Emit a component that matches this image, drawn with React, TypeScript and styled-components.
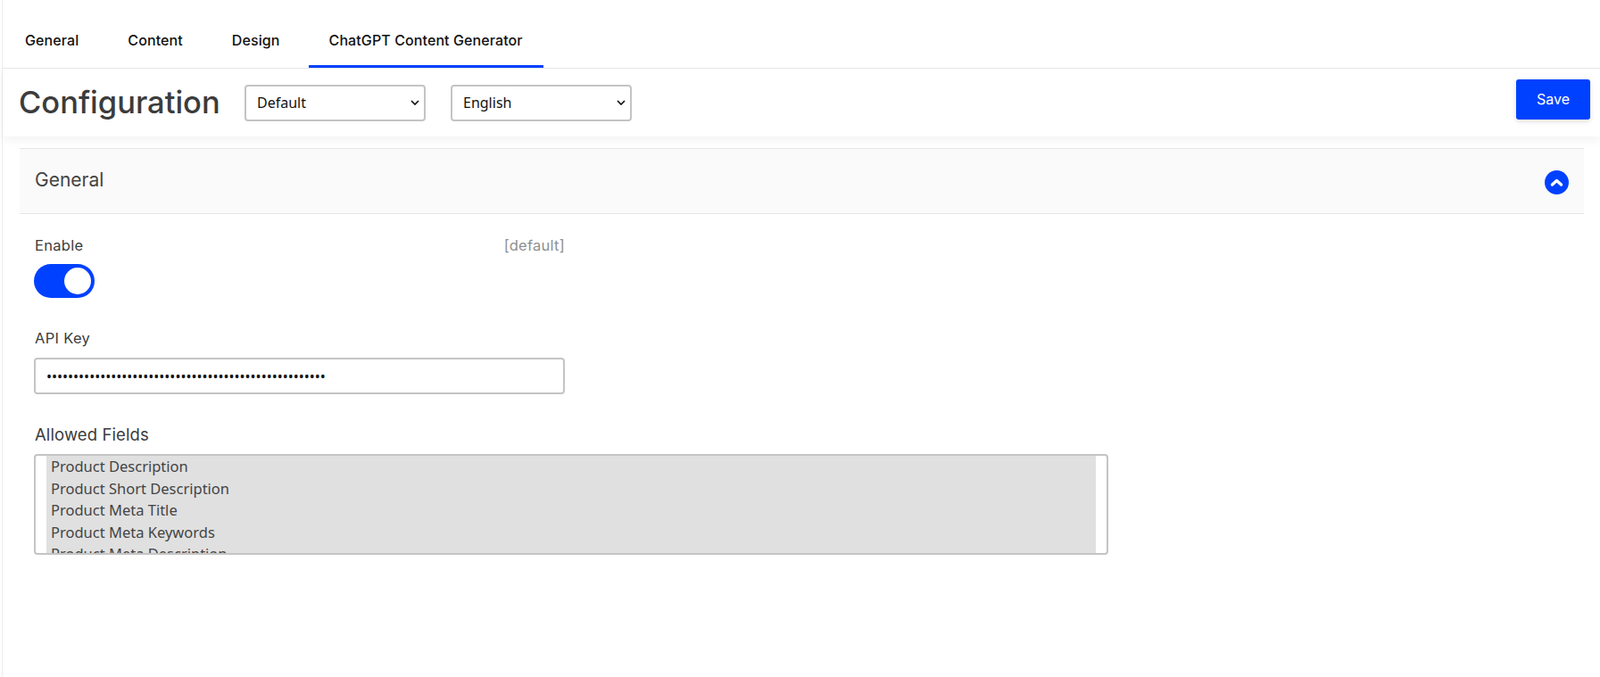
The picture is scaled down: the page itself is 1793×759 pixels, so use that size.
import React from 'react';
import styled, { createGlobalStyle } from 'styled-components';

const GlobalStyle = createGlobalStyle`
    html, body {
        margin: 0;
        padding: 0;
        background: #ffffff;
        overflow: hidden;
    }
    body {
        font-family: 'Inter', 'Liberation Sans', sans-serif;
        color: #3c3c3c;
    }
`;

const tabs = ['General', 'Content', 'Design', 'ChatGPT Content Generator'];
const fields = [
    'Product Description',
    'Product Short Description',
    'Product Meta Title',
    'Product Meta Keywords',
    'Product Meta Description',
];

const chevron = encodeURIComponent(
    '<svg xmlns="http://www.w3.org/2000/svg" width="10" height="6" viewBox="0 0 10 6"><path d="M1 1 L5 5 L9 1" fill="none" stroke="#111" stroke-width="1.7"/></svg>',
);

const App: React.FC = () => {
    return (
        <Page>
            <GlobalStyle />
            <TabBar>
                {tabs.map((tab) => (
                    <Tab key={tab} $active={tab === tabs[3]}>
                        {tab}
                    </Tab>
                ))}
            </TabBar>
            <Header>
                <Title>Configuration</Title>
                <Select defaultValue="Default">
                    <option>Default</option>
                </Select>
                <Select defaultValue="English">
                    <option>English</option>
                </Select>
                <SaveButton>Save</SaveButton>
            </Header>
            <Section>
                <SectionHead>
                    <SectionTitle>General</SectionTitle>
                    <Collapse>
                        <svg width="15" height="11" viewBox="0 0 15 11" fill="none">
                            <path d="M2.5 8 L7.5 3.5 L12.5 8" stroke="#fff" strokeWidth="3.4" strokeLinecap="round" strokeLinejoin="round" />
                        </svg>
                    </Collapse>
                </SectionHead>
                <SectionBody>
                    <NarrowField>
                        <LabelRow>
                            <Label>Enable</Label>
                            <Scope>[default]</Scope>
                        </LabelRow>
                        <Toggle>
                            <Knob />
                        </Toggle>
                    </NarrowField>
                    <ApiField>
                        <Label>API Key</Label>
                        <PasswordInput type="password" defaultValue={'x'.repeat(52)} />
                    </ApiField>
                    <WideField>
                        <BigLabel>Allowed Fields</BigLabel>
                        <ListBox multiple defaultValue={fields} size={5}>
                            {fields.map((field) => (
                                <option key={field}>{field}</option>
                            ))}
                        </ListBox>
                    </WideField>
                </SectionBody>
            </Section>
        </Page>
    );
};

export default App;

const Page = styled.div`
    height: 759px;
    margin-left: 2px;
    border-left: 1px solid #ececec;
    box-sizing: border-box;
`;

const TabBar = styled.nav`
    height: 77px;
    box-sizing: border-box;
    display: flex;
    align-items: stretch;
    gap: 9px;
    padding-left: 2px;
    border-bottom: 1px solid #e8e8e8;
`;

const Tab = styled.div<{ $active?: boolean }>`
    display: flex;
    align-items: center;
    box-sizing: border-box;
    padding: 17px 23px 0;
    font-size: 16px;
    font-weight: 450;
    letter-spacing: 0.1px;
    color: #111111;
    border-bottom: 3px solid ${(p) => (p.$active ? '#0041ff' : 'transparent')};
`;

const Header = styled.header`
    height: 76px;
    box-sizing: border-box;
    display: flex;
    align-items: center;
    padding: 0 11px 0 18px;
    background: #ffffff;
    box-shadow: 0 4px 10px rgba(0, 0, 0, 0.05);
`;

const Title = styled.h1`
    margin: 0 28px 0 0;
    width: 225px;
    font-size: 34.5px;
    line-height: 40px;
    font-weight: 500;
    white-space: nowrap;
    color: #3c3c3c;
`;

const Select = styled.select`
    width: 203px;
    height: 41px;
    margin: 0 28px 0 0;
    padding: 0 20px 0 12px;
    box-sizing: border-box;
    border: 2px solid #c4c4c4;
    border-radius: 4px;
    appearance: none;
    background: #ffffff url("data:image/svg+xml,${chevron}") no-repeat right 5px center;
    font-family: 'Noto Sans', sans-serif;
    font-size: 16px;
    color: #111111;
`;

const SaveButton = styled.button`
    width: 83px;
    height: 45px;
    margin: -8px 0 0 auto;
    border: none;
    border-radius: 3px;
    background: #0041ff;
    color: #ffffff;
    font-family: 'Inter', sans-serif;
    font-size: 16px;
    box-shadow: 0 2px 5px rgba(0, 0, 0, 0.15);
`;

const Section = styled.section`
    margin: 13px 18px 0 19px;
`;

const SectionHead = styled.div`
    height: 74px;
    box-sizing: border-box;
    display: flex;
    align-items: center;
    justify-content: space-between;
    padding: 0 17px 0 17px;
    background: #fafafa;
    border-top: 1px solid #e6e6e6;
    border-bottom: 1px solid #e6e6e6;
`;

const SectionTitle = styled.h2`
    margin: -4px 0 0;
    font-size: 21px;
    font-weight: 400;
    color: #444444;
`;

const Collapse = styled.span`
    width: 27px;
    height: 27px;
    margin-top: 2px;
    border-radius: 50%;
    background: #0041ff;
    display: flex;
    align-items: center;
    justify-content: center;
`;

const SectionBody = styled.div`
    display: flex;
    flex-direction: column;
    padding: 25px 0 0 16px;
`;

const NarrowField = styled.div`
    width: 595px;
`;

const LabelRow = styled.div`
    display: flex;
    justify-content: space-between;
    align-items: center;
`;

const Label = styled.label`
    display: block;
    font-size: 16.5px;
    line-height: 20px;
    letter-spacing: 0.3px;
    padding-left: 1px;
    color: #3c3c3c;
`;

const BigLabel = styled(Label)`
    font-size: 18.5px;
    line-height: 22px;
    letter-spacing: 0.1px;
`;

const Scope = styled.span`
    font-size: 16.5px;
    line-height: 20px;
    letter-spacing: 0.25px;
    color: #8f8f8f;
`;

const Toggle = styled.div`
    width: 68px;
    height: 38px;
    margin-top: 11px;
    box-sizing: border-box;
    padding: 4px;
    display: flex;
    justify-content: flex-end;
    border-radius: 19px;
    background: #0041ff;
`;

const Knob = styled.span`
    width: 30px;
    height: 30px;
    border-radius: 50%;
    background: #ffffff;
`;

const ApiField = styled.div`
    width: 595px;
    margin-top: 35px;
`;

const PasswordInput = styled.input`
    display: block;
    width: 100%;
    height: 41px;
    margin-top: 12px;
    padding: 0 12px;
    box-sizing: border-box;
    border: 2px solid #c4c4c4;
    border-radius: 4px;
    font-family: 'Noto Sans', sans-serif;
    font-size: 16px;
    color: #111111;
    outline: none;
`;

const WideField = styled.div`
    width: 1204px;
    margin-top: 34px;
`;

const ListBox = styled.select`
    display: block;
    width: 100%;
    height: 113px;
    margin-top: 11px;
    padding: 0 12px;
    box-sizing: border-box;
    border: 2px solid #c4c4c4;
    border-radius: 4px;
    background: #ffffff;
    font-family: 'Noto Sans', sans-serif;
    font-size: 16.5px;
    line-height: 24.6px;
    color: #444444;
    overflow: hidden;
    scrollbar-width: none;

    option {
        padding: 0 5px;
        min-height: 24.6px;
        background: #e0e0e0;
        color: #444444;
    }
`;
